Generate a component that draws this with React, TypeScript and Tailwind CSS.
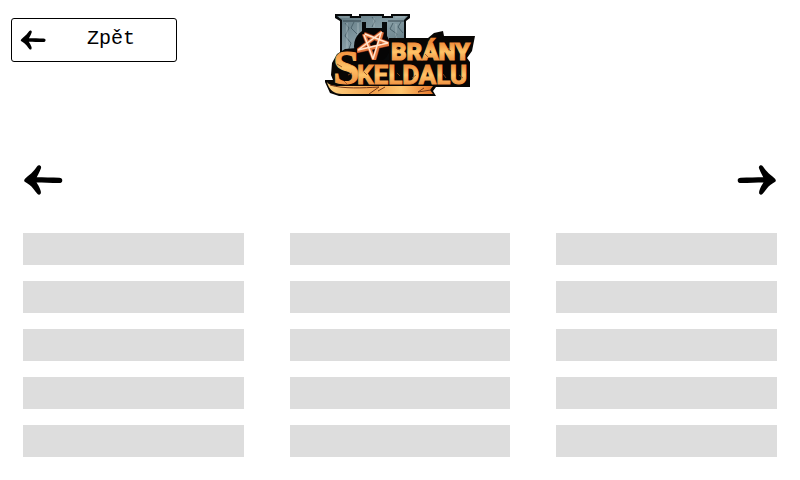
const ARROW =
  "M1.2 15.2C1.4 14.3 2 13.6 2.8 12.9C5.4 10.8 8 9 10 6.6C11.7 4.7 12.8 2.9 14 1.4C14.9 .3 16.3 .1 17.3 .7C18.3 1.4 18.3 2.5 17.8 3.8C17 6.2 15.9 8.2 14.8 10.2L13.7 12.2C20 12.2 29 12.4 36.2 12.7C38.3 12.8 39.4 13.9 39.3 15.4C39.2 17.2 38 18.1 36.2 18.1C28 18 20 17.6 13.5 17.5C15 19.7 16.5 22.2 17.4 25C18 26.7 18.2 28 17.4 29.1C16.6 30 15.2 29.8 14.3 28.8C12.9 27.4 11.9 25.7 10.5 23.9C8.2 21 5.4 18.8 2.2 17C1.5 16.6 1.1 16 1.2 15.2Z";

function Arrow({ className }: { className: string }) {
  return (
    <svg viewBox="0 0 40 30" className={className} aria-hidden="true">
      <path d={ARROW} fill="#000" />
    </svg>
  );
}

const STAR = "M39 20L64 30M64 30L32 37M32 37L57 18M57 18L49 46M49 46L39 20";

function Logo() {
  return (
    <svg viewBox="0 0 150 82" className="h-[82px] w-[150px]" role="img" aria-label="Brány Skeldalu">
      <defs>
        <linearGradient id="stone" x1="0" x2="1" y1="0" y2="1">
          <stop offset="0" stopColor="#5f7780" />
          <stop offset=".45" stopColor="#869da5" />
          <stop offset="1" stopColor="#4f6670" />
        </linearGradient>
        <linearGradient id="gold" x1="0" x2="0" y1="0" y2="1">
          <stop offset=".15" stopColor="#f08a38" />
          <stop offset=".5" stopColor="#ffc468" />
          <stop offset="1" stopColor="#e8762c" />
        </linearGradient>
        <linearGradient id="ribbon" x1="0" x2="1" y1="0" y2="0">
          <stop offset="0" stopColor="#ffd384" />
          <stop offset=".45" stopColor="#f4a34f" />
          <stop offset=".7" stopColor="#ffc770" />
          <stop offset="1" stopColor="#e8762a" />
        </linearGradient>
      </defs>

      {/* castle gate */}
      <path d="M10 0H27V2H34V0H59V2H66V0H85V4L81 7V30H66V46H15V7L10 4Z" fill="#07090a" />
      <path d="M12 2H25V4H36V2H57V4H68V2H83L79 6V26H62V8H57V14H41V8H37V22L30 34V44H17V6Z" fill="url(#stone)" />
      <path d="M18 7H36M63 7H79" stroke="#33434a" strokeWidth="1" fill="none" />
      <path d="M20 9L24 14L20 22L26 29L23 38M29 8L26 14L32 20M68 9L65 15L72 20L69 26M76 8L73 13L78 19M47 3L50 7L47 13" stroke="#4b626b" strokeWidth="1" fill="none" />
      <path d="M14 3H24M70 3H80M22 9V36M33 9V21M71 10V24M49 4V13" stroke="#b9c8cc" strokeWidth="1" opacity=".6" fill="none" />

      {/* pentagram over the dark archway */}
      <circle cx="47" cy="32" r="18" fill="#050505" />
      <path d={STAR} stroke="#7a2a16" strokeWidth="4.6" fill="none" />
      <path d={STAR} stroke="#e87a40" strokeWidth="3.4" fill="none" />
      <path d="M40 20L63 29M63 29L33 36M33 36L57 18M56 19L48 45M48 45L39 21" stroke="#ffe6d0" strokeWidth="1.5" fill="none" />

      {/* dark backing of both words */}
      <path d="M64 24H103L109 19L118 17L119 22H150L147 37L142 44L145 48V73H111L108 77L111 82H14L5 79L0 68V66H8L6 61L7 49L12 40L20 35L32 34V46H64Z" fill="#080604" />

      {/* ribbon */}
      <path d="M2 68C4 71 8 72 13 72H108L105 76L108 80H17C9 80 4 76 2 68Z" fill="url(#ribbon)" />
      <path d="M5 71C18 75 38 74 54 73L44 80M53 77L60 73M99 74L93 78L106 76" stroke="#723516" strokeWidth="1" fill="none" />

      <g fill="url(#gold)" stroke="url(#gold)" className="font-['Roboto',sans-serif] font-black">
        <text x="66" y="46" fontSize="24" strokeWidth="1">BRÁNY</text>
        <text x="32" y="70" fontSize="26" strokeWidth="1" className="font-bold">KELDALU</text>
        <text x="8" y="70" fontSize="48" strokeWidth="1" className="font-['Liberation_Serif',serif] font-bold">S</text>
      </g>
      <path d="M12 50L17 53M27 59L23 61M19 67L22 70M71 34L75 36M100 40L103 43M123 34L126 37M39 58L42 61M72 59L75 62M87 64L91 61M118 60L121 64M134 61L138 64" stroke="#8b4a20" strokeWidth=".8" fill="none" />
    </svg>
  );
}

const columns = [0, 1, 2];
const rows = [0, 1, 2, 3, 4];

export default function App() {
  return (
    <main className="min-h-screen bg-white text-black">
      <header className="grid grid-cols-3 items-start px-[11px] pt-[14px]">
        <button
          type="button"
          className="mt-1 flex h-11 w-[166px] items-center rounded-[3px] border border-black px-2 font-['Liberation_Mono',monospace] text-xl"
        >
          <Arrow className="h-5 w-[26px] shrink-0" />
          <span className="grow pb-0.5 pl-2 text-center">Zpět</span>
        </button>
        <div className="justify-self-center">
          <Logo />
        </div>
      </header>

      <nav aria-label="Stránkování" className="mt-[69px] flex justify-between px-[23px]">
        <button type="button" aria-label="Předchozí">
          <Arrow className="h-[30px] w-10" />
        </button>
        <button type="button" aria-label="Další">
          <Arrow className="h-[30px] w-10 -scale-x-100" />
        </button>
      </nav>

      <section className="mt-[38px] grid grid-cols-3 gap-x-[46px] px-[23px] pb-[23px]">
        {columns.map((column) => (
          <ul key={column} className="flex flex-col gap-4">
            {rows.map((row) => (
              <li key={row} className="h-8 bg-[#ddd]" />
            ))}
          </ul>
        ))}
      </section>
    </main>
  );
}
